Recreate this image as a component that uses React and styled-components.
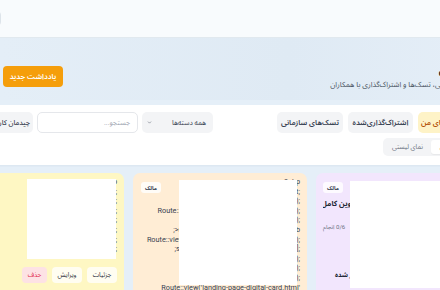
import React from 'react';
import styled, { createGlobalStyle } from 'styled-components';

const Global = createGlobalStyle`
  html, body { margin: 0; padding: 0; }
  body {
    width: 440px; height: 290px; overflow: hidden;
    background: #e5eff8;
    font-family: Roboto, "Noto Sans Arabic", "DejaVu Sans", sans-serif;
  }
  * { box-sizing: border-box; }
`;

const Page = styled.div`
  direction: rtl;
  width: 440px;
  height: 290px;
  overflow: hidden;
  background: #e5eff8;
  display: flex;
  flex-direction: column;
`;

const TopBar = styled.header`
  flex: none;
  height: 38px;
  background: #f8fbfd;
  border-bottom: 1px solid #e1e9ef;
  display: flex;
  align-items: center;
  justify-content: flex-end;
`;

const TopGhost = styled.div`
  width: 40px;
  height: 17px;
  margin-left: -39px;
  border: 1px solid #dde4ea;
  border-radius: 5px;
  background: #ffffff;
`;

const Hero = styled.section`
  flex: none;
  height: 62px;
  display: flex;
  align-items: flex-end;
  justify-content: space-between;
  padding: 0 0 9px 3px;
  margin-right: -85px;
  background: linear-gradient(90deg, #e4eef7 0%, #dfeaf4 55%, #e6eff8 100%);
`;

const HeroText = styled.div`
  display: flex;
  flex-direction: column;
  gap: 1px;
`;

const Title = styled.h1`
  margin: 0;
  font-size: 11.5px;
  font-weight: 700;
  color: #111827;
  line-height: 16px;
  white-space: nowrap;
`;

const Subtitle = styled.p`
  margin: 0;
  font-size: 7.5px;
  color: #4b5563;
  line-height: 12px;
  white-space: nowrap;
`;

const PrimaryButton = styled.button`
  width: 60px;
  height: 21px;
  margin-bottom: 4px;
  border: none;
  border-radius: 4px;
  background: #f59e0b;
  color: #ffffff;
  font-family: inherit;
  font-size: 7.5px;
  font-weight: 600;
  padding: 0;
`;

const Panel = styled.section`
  flex: none;
  margin: 5px -50px 0 -50px;
  height: 60px;
  background: #ffffff;
  padding: 7px 12px 9px 12px;
  display: flex;
  flex-direction: column;
  gap: 5px;
  box-shadow: 0 1px 2px rgba(15, 40, 80, 0.05);
`;

const ToolRow = styled.div`
  display: flex;
  justify-content: space-between;
  align-items: center;
`;

const Group = styled.div`
  flex: none;
  display: flex;
  align-items: center;
  gap: ${(p) => p.$gap || 5}px;
`;

const Tab = styled.button`
  flex: none;
  width: ${(p) => p.$w}px;
  height: 21px;
  padding: 0;
  border: none;
  border-radius: 5px;
  font-family: inherit;
  font-size: 7.5px;
  font-weight: 600;
  white-space: nowrap;
  background: ${(p) => (p.$active ? '#fef3c7' : '#f3f4f6')};
  color: ${(p) => (p.$active ? '#b45309' : '#374151')};
`;

const Select = styled.div`
  flex: none;
  width: 71px;
  height: 21px;
  border-radius: 5px;
  background: #f3f4f6;
  display: flex;
  align-items: center;
  justify-content: space-between;
  padding: 0 7px 0 5px;
  font-size: 7px;
  color: #374151;
  white-space: nowrap;
`;

const Search = styled.div`
  flex: none;
  width: 101px;
  height: 21px;
  border: 1px solid #e5e7eb;
  border-radius: 5px;
  background: #ffffff;
  display: flex;
  align-items: center;
  padding: 0 7px;
  font-size: 7px;
  color: #9ca3af;
`;

const LayoutButton = styled.div`
  flex: none;
  width: 71px;
  height: 21px;
  border-radius: 5px;
  background: #f3f4f6;
  display: flex;
  align-items: center;
  padding: 0 3px;
  font-size: 7px;
  font-weight: 500;
  color: #374151;
  white-space: nowrap;
`;

const Segmented = styled.div`
  display: flex;
  padding: 2px;
  gap: 1px;
  border-radius: 5px;
  background: #f3f4f6;
`;

const Segment = styled.div`
  width: 45px;
  height: 14px;
  border-radius: 3px;
  display: flex;
  align-items: center;
  justify-content: center;
  font-size: 6.5px;
  white-space: nowrap;
  background: ${(p) => (p.$active ? '#ffffff' : 'transparent')};
  color: ${(p) => (p.$active ? '#1f2937' : '#6b7280')};
  box-shadow: ${(p) => (p.$active ? '0 1px 1px rgba(0,0,0,0.05)' : 'none')};
`;

const Cards = styled.div`
  flex: none;
  margin: 8px -50px 0 0;
  display: flex;
  gap: 9px;
`;

const Card = styled.article`
  position: relative;
  flex: none;
  width: 174px;
  height: 150px;
  border-radius: 7px;
  padding: ${(p) => p.$pt}px 7px 7px 7px;
  background: ${(p) => p.$bg};
  overflow: hidden;
`;

const CardHead = styled.div`
  display: flex;
  justify-content: flex-end;
`;

const Badge = styled.span`
  float: ${(p) => (p.$float ? 'left' : 'none')};
  margin: ${(p) => (p.$float ? '5px 4px 3px 1px' : '0')};
  width: 20px;
  height: 11px;
  border-radius: 3px;
  background: rgba(255, 255, 255, 0.8);
  font-size: 5.5px;
  font-weight: 700;
  color: #374151;
  display: flex;
  align-items: center;
  justify-content: center;
`;

const Code = styled.div`
  font-family: Roboto, "Liberation Sans", sans-serif;
  direction: ltr;
  font-size: 7.3px;
  line-height: 9.6px;
  color: #374151;
  white-space: pre;
  text-align: right;
`;

const Preview = styled.div`
  position: absolute;
  top: ${(p) => p.$top}px;
  right: ${(p) => p.$right}px;
  width: ${(p) => p.$w}px;
  height: ${(p) => p.$h}px;
  background: #ffffff;
`;

const Actions = styled.div`
  position: absolute;
  top: 94px;
  right: 7px;
  display: flex;
  gap: 5px;
`;

const ActionButton = styled.button`
  width: ${(p) => p.$w}px;
  height: 16px;
  padding: 0;
  border: none;
  border-radius: 4px;
  font-family: inherit;
  font-size: 6.5px;
  background: ${(p) => (p.$danger ? '#fde2e4' : '#fffdf1')};
  color: ${(p) => (p.$danger ? '#e11d48' : '#1f2937')};
`;

const TaskTitle = styled.div`
  font-size: 7.5px;
  font-weight: 700;
  color: #1f2937;
  line-height: 11px;
  margin-top: 5px;
  white-space: nowrap;
  overflow: hidden;
`;

const Progress = styled.div`
  margin-top: 12px;
  display: flex;
  justify-content: flex-end;
  font-size: 6px;
  color: #6b7280;
`;

const Status = styled.div`
  margin-top: 35px;
  display: flex;
  justify-content: flex-end;
  padding-left: 12px;
  font-size: 6.5px;
  font-weight: 700;
  color: #1f2937;
`;

const Meta = styled.div`
  margin-top: 6px;
  font-size: 5px;
  color: #9ca3af;
  white-space: nowrap;
`;

const Chevron = () => (
  <svg width="5" height="5" viewBox="0 0 24 24" fill="none" stroke="#6b7280" strokeWidth="3" strokeLinecap="round" strokeLinejoin="round">
    <path d="m6 9 6 6 6-6" />
  </svg>
);

const codeA = [
  '<?php',
  'use App\\Http;',
  "Route::get('/');",
  'return view();',
  '});',
  "Route::view('a');",
  "Route::post('b');",
  "Route::view('c');",
];

const codeB = [
  '<?php',
  'use Illuminate\\Support;',
  "Route::get('/', 'welcome');",
  "Route::get('/home', [HomeController::class]);",
  "return view('home');",
  ";>nav class='menu'><a href='/about'>ab",
  "Route::view('/contact', 'pages.contact-form-v2');",
  ";st = ['title' => 'digital business card v2'];",
  "Route::view('/a', 'a');",
  "Route::view('/b', 'b');",
  "Route::get('/c', 'c');",
  "Route::view('landing-page-digital-card.html'",
];

export default function App() {
  return (
    <>
      <Global />
      <Page>
        <TopBar>
          <TopGhost />
        </TopBar>
        <Hero>
          <HeroText>
            <Title>یادداشت‌های من</Title>
            <Subtitle>مدیریت یادداشت‌های شخصی، تسک‌ها و اشتراک‌گذاری با همکاران</Subtitle>
          </HeroText>
          <PrimaryButton>یادداشت جدید</PrimaryButton>
        </Hero>
        <Panel>
          <ToolRow>
            <Group $gap={5}>
              <Tab $active $w={60}>یادداشت‌های من</Tab>
              <Tab $w={65}>اشتراک‌گذاری‌شده</Tab>
              <Tab $w={66}>تسک‌های سازمانی</Tab>
            </Group>
            <Group $gap={4}>
              <Select>
                <span>همه دسته‌ها</span>
                <Chevron />
              </Select>
              <Search>جستجو...</Search>
              <LayoutButton>چیدمان کارت‌ها</LayoutButton>
            </Group>
          </ToolRow>
          <ToolRow>
            <Segmented>
              <Segment $active>نمای کارتی</Segment>
              <Segment>نمای لیستی</Segment>
            </Segmented>
          </ToolRow>
        </Panel>
        <Cards>
          <Card $bg="#f2e6fd" $pt={9}>
            <CardHead>
              <Badge>مالک</Badge>
            </CardHead>
            <TaskTitle>چک‌لیست راه‌اندازی سرور نو، بررسی و تدوین کامل</TaskTitle>
            <Progress>0/6 انجام</Progress>
            <Status>منتشر شده</Status>
            <Meta>ایجاد شده در ۱۲ اردیبهشت ۱۴۰۳</Meta>
            <Preview $top={8} $right={10} $w={130} $h={107} />
          </Card>
          <Card $bg="#ffedd5" $pt={4}>
            <Badge $float>مالک</Badge>
            <Code>{codeB.join('\n')}</Code>
            <Preview $top={7} $right={10} $w={118} $h={105} />
          </Card>
          <Card $bg="#fef7c3" $pt={4}>
            <Code>{codeA.join('\n')}</Code>
            <Preview $top={6} $right={8} $w={89} $h={80} />
            <Actions>
              <ActionButton $w={30}>جزئیات</ActionButton>
              <ActionButton $w={30}>ویرایش</ActionButton>
              <ActionButton $w={25} $danger>حذف</ActionButton>
            </Actions>
          </Card>
        </Cards>
      </Page>
    </>
  );
}
